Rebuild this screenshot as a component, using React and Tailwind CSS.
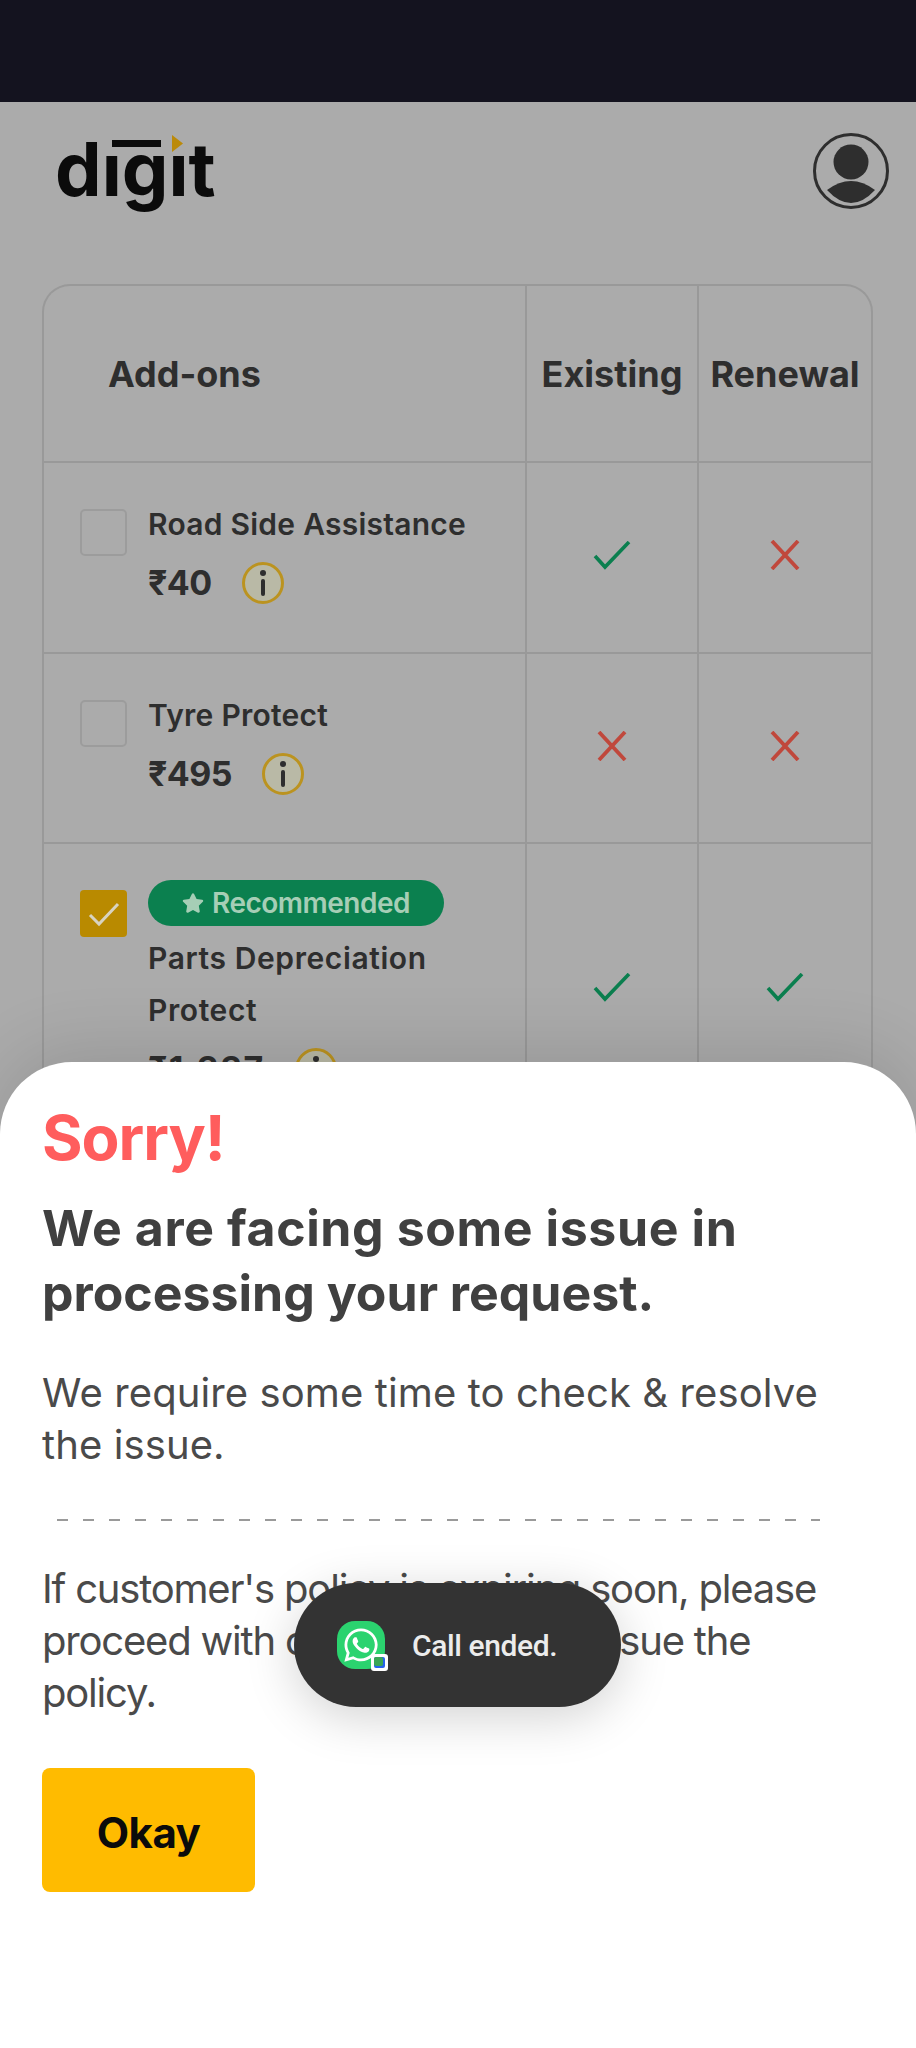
import React from "react";
import { FaWhatsapp, FaStar } from "react-icons/fa";

const F = { fontFamily: '"Inter", sans-serif' };

function Tick({ color = "#0b7f4f" }) {
  return (
    <svg width="38" height="29" viewBox="0 0 38 29" fill="none">
      <path d="M2 15 L12 26 L36 1" stroke={color} strokeWidth="3.6" />
    </svg>
  );
}
function Cross() {
  return (
    <svg width="30" height="30" viewBox="0 0 30 30" fill="none">
      <path d="M2 1 L28 29 M28 1 L2 29" stroke="#c0483c" strokeWidth="3.8" />
    </svg>
  );
}
function Info() {
  return (
    <span className="relative flex h-[42px] w-[42px] items-center justify-center rounded-full border-[3px] border-[#bb9320] bg-[#b9b9a6]">
      <span className="flex flex-col items-center gap-[3px]">
        <span className="h-[6px] w-[6px] rounded-full bg-[#2e2e2e]" />
        <span className="h-[17px] w-[4px] rounded-sm bg-[#2e2e2e]" />
      </span>
    </span>
  );
}
function Box({ checked }) {
  return checked ? (
    <span className="flex h-[47px] w-[47px] shrink-0 items-center justify-center rounded-[4px] bg-[#b98a00]">
      <svg width="32" height="26" viewBox="0 0 32 26" fill="none">
        <path d="M2 14 L11 23 L30 3" stroke="#d8d3c0" strokeWidth="3" />
      </svg>
    </span>
  ) : (
    <span className="h-[47px] w-[47px] shrink-0 rounded-[5px] border-[2px] border-[#9c9c9c]" />
  );
}
const mark = "flex items-center justify-center border-t-[2px] border-l-[2px] border-[#999] pb-[5px]";
const head = "flex items-center justify-center border-l-[2px] border-[#999] text-[36px] font-bold whitespace-nowrap text-[#2e2e2e]";
function Row({ name, price, ex, re, h }) {
  return (
    <>
      <div className={`flex ${h} items-start border-t-[2px] border-[#999] pl-[36px] pt-[46px]`}>
        <Box />
        <div className="ml-[21px] -mt-[5px]">
          <div className="text-[30px] leading-[40px] font-semibold tracking-[0.25px] text-[#2e2e2e]">{name}</div>
          <div className="mt-[18px] flex items-center">
            <span className="text-[34px] leading-[40px] font-bold tracking-[-0.6px] text-[#2e2e2e]">{price}</span>
            <span className="ml-[30px]"><Info /></span>
          </div>
        </div>
      </div>
      <div className={mark}>{ex ? <Tick /> : <Cross />}</div>
      <div className={mark}>{re ? <Tick /> : <Cross />}</div>
    </>
  );
}

export default function App() {
  return (
    <div className="relative h-[2048px] w-[916px] overflow-hidden bg-[#ababab]" style={F}>
      <div className="h-[102px] bg-[#14131f]" />
      <header className="flex h-[182px] items-start justify-between pl-[55px] pr-[27px]">
        <div className="relative mt-[25px] h-[100px] w-[170px]">
          <span className="block text-[74px] leading-[84px] font-bold text-[#0b0b0b]">digit</span>
          <span className="absolute left-[46px] top-[9px] h-[17px] w-[58px] bg-[#ababab]" />
          <span className="absolute left-[57px] top-[13px] h-[7px] w-[49px] bg-[#0b0b0b]" />
          <span className="absolute left-[115px] top-[6px] h-[20px] w-[16px] bg-[#ababab]" />
          <svg className="absolute left-[117px] top-[8px]" width="11" height="17" viewBox="0 0 11 17"><path d="M0 0 L11 8.5 L0 17 Z" fill="#bb8a0a" /></svg>
        </div>
        <svg className="mt-[31px]" width="76" height="76" viewBox="0 0 76 76" fill="none">
          <circle cx="38" cy="38" r="36.5" stroke="#2e2e2e" strokeWidth="3" />
          <circle cx="38" cy="29" r="17.5" fill="#2e2e2e" />
          <path d="M14 57 Q38 39 62 57 Q50 70 38 70 Q26 70 14 57 Z" fill="#2e2e2e" />
        </svg>
      </header>
      <section className="ml-[42px] w-[831px] rounded-t-[28px] border-x-[2px] border-t-[2px] border-[#999]">
        <div className="grid grid-cols-[481px_172px_174px]">
          <div className="flex h-[175px] items-center pl-[64px] text-[36px] font-bold text-[#2e2e2e]">Add-ons</div>
          <div className={head}>Existing</div>
          <div className={head}>Renewal</div>
          <Row name="Road Side Assistance" price="₹40" ex h="h-[191px]" />
          <Row name="Tyre Protect" price="₹495" h="h-[190px]" />
          <div className="flex h-[330px] items-start border-t-[2px] border-[#999] pl-[36px] pt-[46px]">
            <Box checked />
            <div className="ml-[21px] -mt-[10px]">
              <div className="flex h-[46px] w-[296px] items-center justify-center gap-[8px] rounded-full bg-[#0b804f] text-[28px] font-semibold tracking-[-0.5px] text-[#a6ceb6]">
                <FaStar className="text-[22px]" /> Recommended
              </div>
              <div className="mt-[6px] text-[30px] leading-[52px] font-semibold tracking-[0.6px] text-[#2e2e2e]">Parts Depreciation<br />Protect</div>
              <div className="mt-[12px] flex items-center">
                <span className="text-[34px] leading-[40px] font-bold tracking-[1.4px] text-[#2e2e2e]">₹1,337</span>
                <span className="ml-[30px]"><Info /></span>
              </div>
            </div>
          </div>
          <div className="flex items-start justify-center border-t-[2px] border-l-[2px] border-[#999] pt-[129px]"><Tick /></div>
          <div className="flex items-start justify-center border-t-[2px] border-l-[2px] border-[#999] pt-[129px]"><Tick /></div>
        </div>
      </section>

      <section className="absolute inset-x-0 bottom-0 top-[1062px] rounded-t-[72px] bg-white px-[42px] pt-[41px] shadow-[0_-12px_70px_rgba(0,0,0,0.12)]">
        <h1 className="text-[62px] leading-[70px] font-bold tracking-[-1px] text-[#ff5d5d]">Sorry!</h1>
        <h2 className="mt-[23px] text-[50px] leading-[65px] font-bold tracking-[0.6px] text-[#404040]">We are facing some issue in<br /><span className="tracking-[0px]">processing your request.</span></h2>
        <p className="mt-[41px] text-[40px] leading-[52px] font-normal tracking-[0.1px] text-[#4a4a4a]">We require some time to check &amp; resolve<br />the issue.</p>
        <div className="mt-[48px] ml-[15px] h-[2px] w-[763px] bg-[repeating-linear-gradient(to_right,#9a9a9a_0_11px,transparent_11px_26px)]" />
        <p className="mt-[42px] text-[40px] leading-[52px] font-normal tracking-[-1.2px] text-[#4a4a4a]">If customer's policy is expiring soon, please<br />proceed with cash payment to issue the<br />policy.</p>
        <button className="mt-[49px] flex h-[124px] w-[213px] items-center justify-center rounded-[8px] bg-[#ffbb00] pt-[4px] text-[42px] font-bold tracking-[-0.5px] text-[#0b0b0b]">Okay</button>
      </section>

      <div className="absolute left-[294px] top-[1583px] flex h-[124px] w-[327px] items-center rounded-full bg-[#333333] pl-[43px] shadow-[0_10px_50px_rgba(0,0,0,0.18)]">
        <span className="relative flex h-[48px] w-[48px] items-center justify-center rounded-[18px] bg-[#2bd36f]">
          <FaWhatsapp className="text-[38px] text-white" />
          <span className="absolute -bottom-[2px] -right-[3px] flex h-[17px] w-[17px] items-center justify-center rounded-[3px] bg-white">
            <span className="relative h-[11px] w-[11px] rounded-[2px] bg-[#2563eb]">
              <span className="absolute left-0 top-0 h-[9px] w-[9px] rounded-[2px] bg-[#3aa655]" />
            </span>
          </span>
        </span>
        <span className="ml-[27px] text-[30px] font-medium tracking-[-0.4px] text-[#ececec]" style={{ fontFamily: '"Roboto", sans-serif' }}>Call ended.</span>
      </div>
    </div>
  );
}
